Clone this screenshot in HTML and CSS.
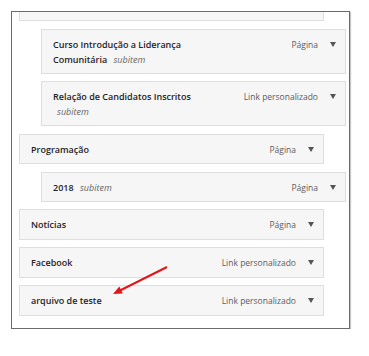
FILE: index.html
```html
<!DOCTYPE html>
<html lang="pt-BR">
  <head>
    <meta charset="UTF-8" />
    <meta name="viewport" content="width=device-width, initial-scale=1.0" />
    <title>Menu</title>
    <link rel="stylesheet" href="styles.css">
  </head>
  <body>
    <div class="frame">
      <ul class="menu">
        <li class="item cut"><div class="bar"></div></li>
        <li class="item sub">
          <div class="bar">
            <span class="title">Curso Introdução a Liderança Comunitária <em>subitem</em></span>
            <span class="type">Página</span>
            <span class="toggle"></span>
          </div>
        </li>
        <li class="item sub">
          <div class="bar">
            <span class="title">Relação de Candidatos Inscritos <em>subitem</em></span>
            <span class="type">Link personalizado</span>
            <span class="toggle"></span>
          </div>
        </li>
        <li class="item">
          <div class="bar">
            <span class="title">Programação</span>
            <span class="type">Página</span>
            <span class="toggle"></span>
          </div>
        </li>
        <li class="item sub">
          <div class="bar">
            <span class="title">2018 <em>subitem</em></span>
            <span class="type">Página</span>
            <span class="toggle"></span>
          </div>
        </li>
        <li class="item">
          <div class="bar">
            <span class="title">Notícias</span>
            <span class="type">Página</span>
            <span class="toggle"></span>
          </div>
        </li>
        <li class="item">
          <div class="bar">
            <span class="title">Facebook</span>
            <span class="type">Link personalizado</span>
            <span class="toggle"></span>
          </div>
        </li>
        <li class="item">
          <div class="bar">
            <span class="title">arquivo de teste</span>
            <span class="type">Link personalizado</span>
            <span class="toggle"></span>
          </div>
        </li>
      </ul>
      <!-- red annotation arrow -->
      <svg class="pointer" width="60" height="32" viewBox="0 0 60 32">
        <line x1="56" y1="2" x2="9" y2="25.5" stroke="#e5141b" stroke-width="2" />
        <polygon points="2,29 8.3,21.4 11.8,28.6" fill="#e5141b" />
      </svg>
    </div>
  </body>
</html>
```

FILE: styles.css
```css
body {
  margin: 0;
  background: #fff;
  font-family: "Open Sans", "Noto Sans", sans-serif;
  color: #23282d;
}
.frame {
  position: relative;
  margin: 11px 0 0 11px;
  width: 337px;
  height: 316px;
  border: 1px solid #6a6a6a;
  box-shadow: 1px 1px 1px #c8c8c8;
  overflow: hidden;
}
.menu {
  list-style: none;
  margin: 0;
  padding: 0 0 15px 7px;
  display: flex;
  flex-direction: column;
  gap: 7.5px;
}
.item {
  width: 305px;
}
.item.sub {
  margin-left: 22px;
}
.item.cut .bar {
  height: 8px;
  padding: 0;
  border-top: none;
}
.bar {
  display: flex;
  align-items: flex-start;
  background: #f6f6f6;
  border: 1px solid #dedede;
  padding: 7px 9px 6px 11px;
  font-size: 9px;
  line-height: 15.5px;
}
.item.sub .bar {
  line-height: 15px;
}
.title {
  flex: 1;
  max-width: 148px;
  margin-right: auto;
  font-weight: 600;
  color: #1f2326;
}
.title em {
  font-weight: 400;
  color: #666;
  margin-left: 4px;
}
.type {
  font-size: 8.5px;
  color: #5c5c5c;
  white-space: nowrap;
}
.toggle {
  width: 0;
  height: 0;
  margin: 5px 0 0 12px;
  border-left: 3px solid transparent;
  border-right: 3px solid transparent;
  border-top: 5px solid #555;
}
.pointer {
  position: absolute;
  left: 99px;
  top: 253px;
}
```
